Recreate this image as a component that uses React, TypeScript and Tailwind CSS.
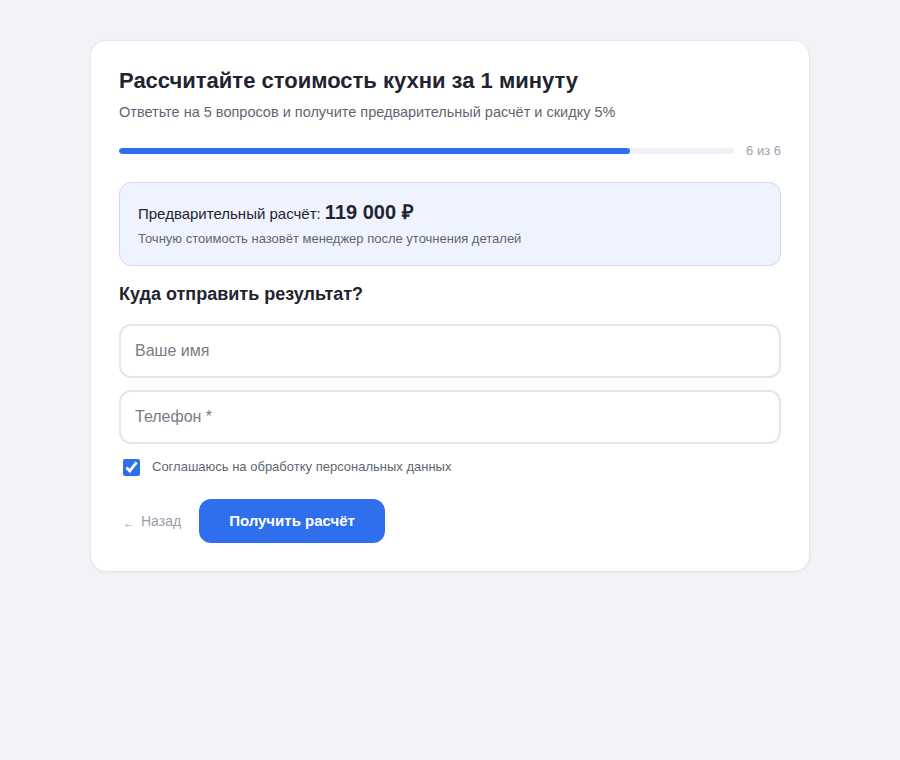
import React, { useState } from 'react';

const base = "font-['Liberation_Sans','Arial',sans-serif]";

export default function App() {
  const [agree, setAgree] = useState(true);
  const step = 6;
  const total = 6;
  const percent = 83.1;

  return (
    <div className={`min-h-screen w-full bg-[#f2f3f7] pt-10 ${base}`}>
      <div className="mx-auto w-[720px] rounded-2xl border border-[#e4e6eb] bg-white px-7 pb-7 pt-6 shadow-[0_1px_3px_rgba(0,0,0,0.04)]">
        <h1 className="text-[22px] font-bold leading-8 text-[#1f2430]">
          Рассчитайте стоимость кухни за 1 минуту
        </h1>
        <p className="mt-1 text-[14.5px] leading-[22px] text-[#5f6672]">
          Ответьте на 5 вопросов и получите предварительный расчёт и скидку 5%
        </p>

        <div className="mt-5 flex items-center gap-3">
          <div className="h-[6px] flex-1 overflow-hidden rounded-full bg-[#eef1f6]">
            <div className="h-full rounded-full bg-[#2f6fed]" style={{ width: `${percent}%` }} />
          </div>
          <span className="text-[13px] leading-4 text-[#9aa0ab]">
            {step} из {total}
          </span>
        </div>

        <div className="mt-[23px] rounded-xl border border-[#cfdcf5] bg-[#eef3fd] px-[18px] py-[17px]">
          <div className="text-[15px] leading-6 text-[#1f2430]">
            Предварительный расчёт: <span className="text-[20px] font-bold">119 000 ₽</span>
          </div>
          <div className="mt-1 text-[13px] leading-[18px] text-[#5f6672]">
            Точную стоимость назовёт менеджер после уточнения деталей
          </div>
        </div>

        <h2 className="mt-4 text-[18px] font-bold leading-6 text-[#1f2430]">
          Куда отправить результат?
        </h2>

        <div className="mt-[18px] flex flex-col gap-3">
          <input
            type="text"
            placeholder="Ваше имя"
            className="h-[54px] w-full rounded-xl border-2 border-[#e3e6ec] bg-white px-[14px] text-[16px] text-[#1f2430] outline-none placeholder:text-[#777c85]"
          />
          <input
            type="tel"
            placeholder="Телефон *"
            className="h-[54px] w-full rounded-xl border-2 border-[#e3e6ec] bg-white px-[14px] text-[16px] text-[#1f2430] outline-none placeholder:text-[#777c85]"
          />
        </div>

        <label className="mt-[14px] flex items-center gap-3 pl-1 text-[13px] leading-[18px] text-[#5f6672]">
          <input
            type="checkbox"
            checked={agree}
            onChange={(e) => setAgree(e.target.checked)}
            className="m-0 h-[17px] w-[17px] accent-[#2f6fed]"
          />
          Соглашаюсь на обработку персональных данных
        </label>

        <div className="mt-[23px] flex items-center gap-[18px]">
          <button className="flex items-center gap-[6px] pl-1 text-[14px] text-[#9aa0ab]">
            <span className="mt-1 text-[12px]">←</span>
            <span>Назад</span>
          </button>
          <button className="h-11 rounded-xl bg-[#2f6fed] px-[30px] text-[15px] font-bold text-white">
            Получить расчёт
          </button>
        </div>
      </div>
    </div>
  );
}
